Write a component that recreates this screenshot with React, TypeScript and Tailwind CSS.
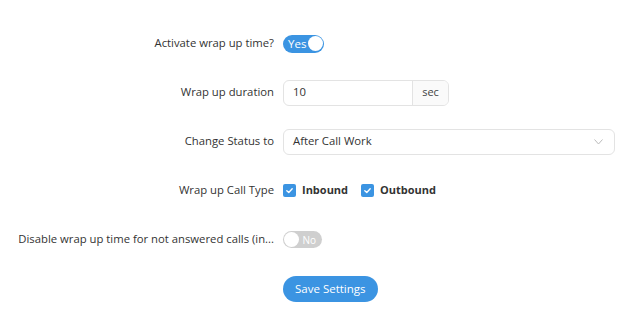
import React, { useState } from "react";

const Row = ({ label, children }: { label: string; children: React.ReactNode }) => (
  <div className="flex items-center h-[49px]">
    <div className="w-[274px] shrink-0 text-right text-[11.3px] text-[#333] whitespace-nowrap">
      {label}
    </div>
    <div className="ml-[9px] flex items-center flex-1">{children}</div>
  </div>
);

const Check = ({ label }: { label: string }) => (
  <label className="flex items-center mr-[13px]">
    <span className="w-[13px] h-[13px] rounded-[2px] bg-[#3b94e2] flex items-center justify-center">
      <svg width="9" height="9" viewBox="0 0 10 10">
        <path d="M2 5.2 L4.2 7.2 L8 3" fill="none" stroke="white" strokeWidth="1.5" strokeLinecap="round" strokeLinejoin="round" />
      </svg>
    </span>
    <span className="ml-[6px] text-[11px] font-bold text-[#333]">{label}</span>
  </label>
);

const App = () => {
  const [active, setActive] = useState(true);
  const [disable, setDisable] = useState(false);
  return (
    <div className="w-[637px] h-[310px] bg-white pt-[19px] font-['Open_Sans',sans-serif]">
      <Row label="Activate wrap up time?">
        <button
          onClick={() => setActive(!active)}
          className="relative w-[41px] h-[18px] rounded-full bg-[#3b94e2] flex items-center"
        >
          <span className="ml-[5px] text-[11.5px] text-white leading-none">{active ? "Yes" : "No"}</span>
          <span className="absolute right-[1.5px] top-[1.5px] w-[15px] h-[15px] rounded-full bg-white" />
        </button>
      </Row>
      <Row label="Wrap up duration">
        <div className="flex h-[26px] w-[166px] border border-[#e3e3e3] rounded-[6px] overflow-hidden">
          <input
            defaultValue="10"
            className="flex-1 min-w-0 px-[9px] text-[11.3px] text-[#333] outline-none"
          />
          <div className="w-[36px] border-l border-[#e3e3e3] bg-[#fafafa] flex items-center justify-center text-[11px] text-[#444]">
            sec
          </div>
        </div>
      </Row>
      <Row label="Change Status to">
        <div className="flex items-center justify-between h-[26px] w-[332px] border border-[#e3e3e3] rounded-[6px] px-[9px]">
          <span className="text-[11.3px] text-[#333]">After Call Work</span>
          <svg width="9" height="6" viewBox="0 0 9 6" className="mr-[2px]">
            <path d="M0.5 0.5 L4.5 5 L8.5 0.5" fill="none" stroke="#bbb" strokeWidth="1" />
          </svg>
        </div>
      </Row>
      <Row label="Wrap up Call Type">
        <Check label="Inbound" />
        <Check label="Outbound" />
      </Row>
      <Row label="Disable wrap up time for not answered calls (in...">
        <button
          onClick={() => setDisable(!disable)}
          className="relative w-[39px] h-[17px] rounded-full bg-[#cfcfcf] flex items-center justify-end"
        >
          <span className="absolute left-[1px] top-[1px] w-[15px] h-[15px] rounded-full bg-white" />
          <span className="mr-[6px] text-[10px] text-white leading-none">No</span>
        </button>
      </Row>
      <Row label="">
        <button className="h-[26px] px-[12px] rounded-full bg-[#3b94e2] text-white text-[11.5px]">
          Save Settings
        </button>
      </Row>
    </div>
  );
};

export default App;
